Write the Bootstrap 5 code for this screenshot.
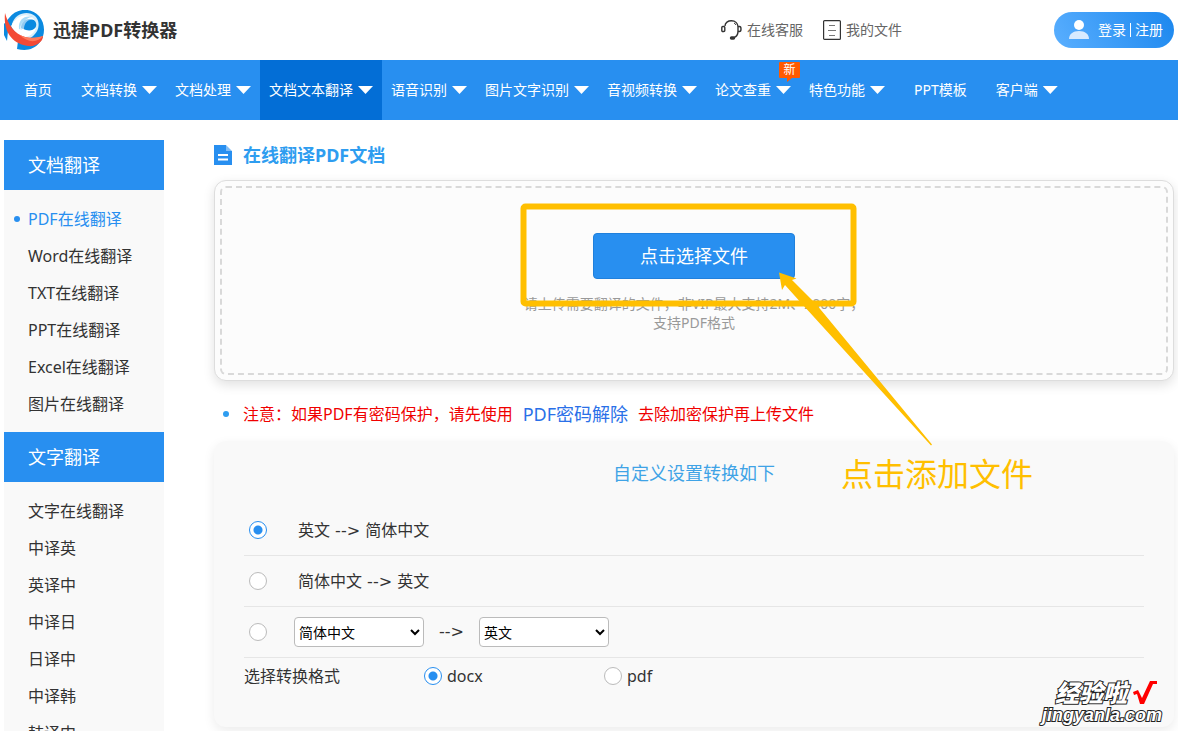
<!DOCTYPE html>
<html lang="zh-CN">
<head>
<meta charset="utf-8">
<meta name="viewport" content="width=device-width, initial-scale=1">
<title>在线翻译PDF文档 - 迅捷PDF转换器</title>
<link href="https://cdn.jsdelivr.net/npm/bootstrap@5.3.0/dist/css/bootstrap.min.css" rel="stylesheet">
<style>
:root { --brand: #288ff0; --brand-dark: #036ed6; --mark: #ffbf00; }
body { font-family: "Noto Sans", "Noto Sans CJK SC", sans-serif; font-size: 16px; line-height: 24px; color: #333; background: #fff; }
a { text-decoration: none; }
.page-pad { padding-left: 4px; padding-right: 4px; }
.site-head { height: 60px; }
.brand-link { gap: 9px; }
.brand-name { font-size: 18px; font-weight: 700; color: #333; }
.head-links { gap: 20px; margin-right: 152px; }
.head-link { gap: 5px; font-size: 14px; color: #666; }
.login-btn { height: 36px; width: 120px; padding: 0 0 0 4px; font-size: 14px; color: #fff; border: 0; border-radius: 18px; background: linear-gradient(60deg, #5aafff, #1b87ee); }
.login-btn svg { margin-right: 9px; }
.login-btn .bar { width: 1px; height: 14px; background: #fff; }
.main-nav { background: var(--brand); }
.nav-item-link { height: 60px; padding: 0 9px; gap: 5px; font-size: 14px; color: #fff; white-space: nowrap; }
.nav-item-link:hover, .nav-item-link.active { color: #fff; background: var(--brand-dark); }
.nav-item-link.wide { padding: 0 20px; }
.caret { width: 15px; height: 8px; background: #fff; clip-path: polygon(0 0, 100% 0, 50% 100%); }
.new-tag { top: 2px; right: 0; width: 21px; height: 16px; font-size: 12px; line-height: 16px; text-align: center; color: #fff; background: #ff5a00; border-radius: 1px; }
.new-tag::after { content: ""; position: absolute; left: 8px; top: 16px; border-top: 4px solid #ff5a00; border-right: 5px solid transparent; }
.side { width: 160px; background: #f9f9f9; }
.side h2 { height: 50px; margin: 0; padding-left: 24px; font-size: 18px; line-height: 50px; font-weight: 400; color: #fff; background: var(--brand); }
.side ul { padding: 11px 0 9px; margin: 0; }
.side li a { display: block; position: relative; padding-left: 24px; line-height: 37px; color: #333; }
.side li a.current { color: var(--brand); }
.side li a.current::before { content: ""; position: absolute; left: 10px; top: 15px; width: 6px; height: 6px; border-radius: 50%; background: var(--brand); }
.layout { gap: 50px; margin-top: 20px; }
.page-title { height: 30px; gap: 11px; font-size: 18px; line-height: 30px; font-weight: 700; color: #2e9df0; }
.upload-box { margin-top: 10px; padding: 5px; border: 1px solid #ddd; border-radius: 12px; background: #fcfcfc; box-shadow: 0 4px 12px rgba(0,0,0,.12); }
.drop-zone { height: 189px; border: 2px dashed #d9d9d9; border-radius: 6px; padding-top: 45px; }
.pick-btn { width: 202px; height: 46px; font-size: 18px; color: #fff; background: var(--brand); border: 1px solid #2080dc; border-radius: 4px; }
.pick-hint { width: 360px; margin: 15px auto 0; font-size: 14px; line-height: 19px; color: #999; }
.tip { padding-left: 9px; margin: 18px 0 12px; height: 30px; color: #f00000; }
.tip .dot { width: 6px; height: 6px; border-radius: 50%; background: #2e9df0; margin-right: 14px; }
.tip a { font-size: 18px; color: #2a70e8; margin: 0 10px; }
.settings { padding: 19px 30px 33px; border-radius: 12px; background: #f9f9f9; box-shadow: 0 4px 12px rgba(0,0,0,.08); }
.settings-title { height: 45px; font-size: 18px; line-height: 26px; color: #3fa3e6; text-align: center; margin: 0; font-weight: 400; }
.opt-row { height: 51px; padding-left: 5px; border-bottom: 1px solid #e6e6e6; }
.opt-row label { margin-left: 31px; }
.arrow { font-family: "DejaVu Sans", sans-serif; white-space: pre; }
.arrow-cell { width: 55px; text-align: center; }
.dot-radio { appearance: none; flex: none; width: 18px; height: 18px; margin: 0; border: 1px solid #bbb; border-radius: 50%; background: #fff; }
.dot-radio:checked { border-color: var(--brand); background: radial-gradient(circle, var(--brand) 4px, #fff 5px); }
.lang-select { width: 130px; height: 30px; font-size: 14px; color: #000; border: 1px solid #bbb; border-radius: 4px; background: #fff; }
.lang-from { margin-left: 27px; }
.format-row { height: 36px; }
.format-cell { width: 180px; gap: 5px; }
.mark-shape { left: 50%; top: 60px; margin-left: -176px; pointer-events: none; }
.mark-text { left: 50%; top: 310px; margin-left: 147px; font-size: 32px; line-height: 48px; color: var(--mark); white-space: nowrap; }
.stamp { right: 16px; bottom: 6px; font-weight: 900; font-style: italic; color: #fff; -webkit-text-stroke: 2px #222; paint-order: stroke fill; }
.stamp-top { font-size: 24px; line-height: 24px; gap: 6px; padding-right: 5px; }
.stamp-site { font-family: "Liberation Sans", sans-serif; font-weight: 700; font-size: 18px; line-height: 20px; }
</style>
</head>
<body class="vh-100 overflow-hidden position-relative">
<header class="site-head page-pad d-flex align-items-center">
  <a href="#" class="brand-link d-flex align-items-center">
    <svg width="40" height="40" viewBox="0 0 40 40" aria-hidden="true">
      <path fill="#0b8ae0" d="M5 8C12-2 27-3 35 6c7 8 6 20 1 26-6 8-14 9-23 7l1-8L4 21l-1 10L0 25V14z"/>
      <path fill="#d9effb" d="M8 14C11 3 24 0 31 6c7 7 3 18-5 22-8 1-15-5-18-14z"/>
      <path fill="#fff" d="M7 16C12 6 22 2 29 8c7 8 1 18-8 19-7-1-11-5-14-11z"/>
      <path fill="#a9dcf8" d="M15 19c-1-9 5-14 14-12-5 0-9 3-9 8l-2 5z"/>
      <path fill="#0b8ae0" d="M17 18c0-7 8-12 14-7 4 6-2 11-9 9-2-1-4-1-5-2z"/>
      <path fill="#fff" d="M16 21c-1-8 7-15 14-11-6-1-9 2-10 8 0 1 0 2 1 3z" opacity=".55"/>
      <path fill="#f34a35" d="M1 3c3 11 9 21 20 24 7 2 13 1 18-1 0 6-7 11-15 10C10 34-1 24 1 3z"/>
      <path fill="#ff7b5c" d="M16 25c8 4 15 3 23 1-5 7-16 7-23-1z"/>
    </svg>
    <span class="brand-name">迅捷PDF转换器</span>
  </a>
  <div class="head-links d-flex align-items-center ms-auto">
    <a href="#" class="head-link d-flex align-items-center">
      <svg width="21" height="20" viewBox="0 0 21 20" fill="none" stroke="#333" stroke-width="1.4" aria-hidden="true">
        <path d="M4 6C4 2.500 7 .8 10.500 .8S17 3 17 7v4c0 3-1 5.500-4 6.500"/><rect x=".8" y="6.500" width="3" height="5" rx="1"/><path d="M17 6.500h1.500q1.500 0 1.500 2.500t-1.500 2.500H17"/><path d="M13 3q1.500.7 2 2" stroke-width="1"/><rect x="9.500" y="17" width="4" height="2" rx="1" fill="#333"/>
      </svg>在线客服</a>
    <a href="#" class="head-link d-flex align-items-center">
      <svg width="18" height="20" viewBox="0 0 18 20" fill="none" stroke="#333" aria-hidden="true"><rect x=".6" y=".6" width="16.800" height="18.800" rx="1" stroke-width="1.200"/><path stroke="#777" d="M6 5.500h6M5 10.500h8M6 15.500h6"/></svg>我的文件</a>
  </div>
  <button type="button" class="login-btn d-flex align-items-center justify-content-center">
    <svg width="20" height="20" viewBox="0 0 20 20" aria-hidden="true"><circle cx="10" cy="5" r="5" fill="#fff"/><path d="M0 19c0-5 4-8 10-8s10 3 10 8z" fill="#d7eaff"/></svg>
    <span>登录</span><span class="bar mx-1"></span><span>注册</span>
  </button>
</header>

<nav class="main-nav page-pad d-flex">
  <a href="#" class="nav-item-link wide d-flex align-items-center">首页</a>
  <a href="#" class="nav-item-link d-flex align-items-center">文档转换<i class="caret"></i></a>
  <a href="#" class="nav-item-link d-flex align-items-center">文档处理<i class="caret"></i></a>
  <a href="#" class="nav-item-link active d-flex align-items-center">文档文本翻译<i class="caret"></i></a>
  <a href="#" class="nav-item-link d-flex align-items-center">语音识别<i class="caret"></i></a>
  <a href="#" class="nav-item-link d-flex align-items-center">图片文字识别<i class="caret"></i></a>
  <a href="#" class="nav-item-link d-flex align-items-center">音视频转换<i class="caret"></i></a>
  <a href="#" class="nav-item-link d-flex align-items-center position-relative">论文查重<i class="caret"></i><span class="new-tag position-absolute">新</span></a>
  <a href="#" class="nav-item-link d-flex align-items-center">特色功能<i class="caret"></i></a>
  <a href="#" class="nav-item-link wide d-flex align-items-center">PPT模板</a>
  <a href="#" class="nav-item-link d-flex align-items-center">客户端<i class="caret"></i></a>
</nav>

<div class="layout page-pad d-flex align-items-start">
  <aside class="side flex-shrink-0">
    <h2>文档翻译</h2>
    <ul class="list-unstyled">
      <li><a href="#" class="current">PDF在线翻译</a></li>
      <li><a href="#">Word在线翻译</a></li>
      <li><a href="#">TXT在线翻译</a></li>
      <li><a href="#">PPT在线翻译</a></li>
      <li><a href="#">Excel在线翻译</a></li>
      <li><a href="#">图片在线翻译</a></li>
    </ul>
    <h2>文字翻译</h2>
    <ul class="list-unstyled">
      <li><a href="#">文字在线翻译</a></li>
      <li><a href="#">中译英</a></li>
      <li><a href="#">英译中</a></li>
      <li><a href="#">中译日</a></li>
      <li><a href="#">日译中</a></li>
      <li><a href="#">中译韩</a></li>
      <li><a href="#">韩译中</a></li>
    </ul>
  </aside>

  <main class="flex-grow-1 position-relative">
    <h1 class="page-title d-flex align-items-center m-0">
      <svg width="18" height="20" viewBox="0 0 18 20" aria-hidden="true"><path fill="#288ff0" d="M0 0h12v6h6v14H0z"/><path fill="#7fbdf7" d="M12 0l6 6h-6z"/><path stroke="#fff" stroke-width="2" d="M4 10h10M4 14.500h10"/></svg>
      在线翻译PDF文档
    </h1>
    <section class="upload-box">
      <div class="drop-zone text-center">
        <button type="button" class="pick-btn">点击选择文件</button>
        <p class="pick-hint">请上传需要翻译的文件，非VIP最大支持2M、2000字，<br>支持PDF格式</p>
      </div>
    </section>
    <p class="tip d-flex align-items-center"><span class="dot"></span>注意：如果PDF有密码保护，请先使用<a href="#">PDF密码解除</a>去除加密保护再上传文件</p>
    <form class="settings">
      <h2 class="settings-title">自定义设置转换如下</h2>
      <div class="opt-row d-flex align-items-center">
        <input class="dot-radio" type="radio" name="dir" id="en-zh" checked><label for="en-zh">英文<span class="arrow"> --&gt; </span>简体中文</label>
      </div>
      <div class="opt-row d-flex align-items-center">
        <input class="dot-radio" type="radio" name="dir" id="zh-en"><label for="zh-en">简体中文<span class="arrow"> --&gt; </span>英文</label>
      </div>
      <div class="opt-row d-flex align-items-center">
        <input class="dot-radio" type="radio" name="dir" id="custom" aria-label="自选语言">
        <select class="lang-select lang-from" aria-label="源语言"><option>简体中文</option></select>
        <span class="arrow arrow-cell">--&gt;</span>
        <select class="lang-select" aria-label="目标语言"><option>英文</option></select>
      </div>
      <div class="format-row d-flex align-items-center">
        <span class="format-cell">选择转换格式</span>
        <span class="format-cell d-flex align-items-center"><input class="dot-radio" type="radio" name="fmt" id="docx" checked><label for="docx">docx</label></span>
        <span class="format-cell d-flex align-items-center"><input class="dot-radio" type="radio" name="fmt" id="pdf"><label for="pdf">pdf</label></span>
      </div>
    </form>
    <svg class="mark-shape position-absolute" width="420" height="250" viewBox="518 200 420 250" aria-hidden="true">
      <rect x="523.500" y="206.500" width="330" height="97" rx="2" fill="none" stroke="#ffbf00" stroke-width="6"/>
      <path fill="#ffbf00" d="M779 272.500l17.500 6-4.500 1.500 24 24L932 444.500l-1 1L803 305l-18-20-3 5z"/>
    </svg>
    <span class="mark-text position-absolute">点击添加文件</span>
  </main>
</div>

<div class="stamp position-absolute">
  <div class="stamp-top d-flex align-items-center justify-content-end">经验啦
    <svg width="24" height="24" viewBox="0 0 24 24" aria-hidden="true"><path fill="#f00" d="M0 11l5-2 4 8L17 0h7v3h-4L11 23H7L4 13l-3 1z"/></svg>
  </div>
  <div class="stamp-site">jingyanla.com</div>
</div>
<script src="https://cdn.jsdelivr.net/npm/bootstrap@5.3.0/dist/js/bootstrap.bundle.min.js"></script>
</body>
</html>
